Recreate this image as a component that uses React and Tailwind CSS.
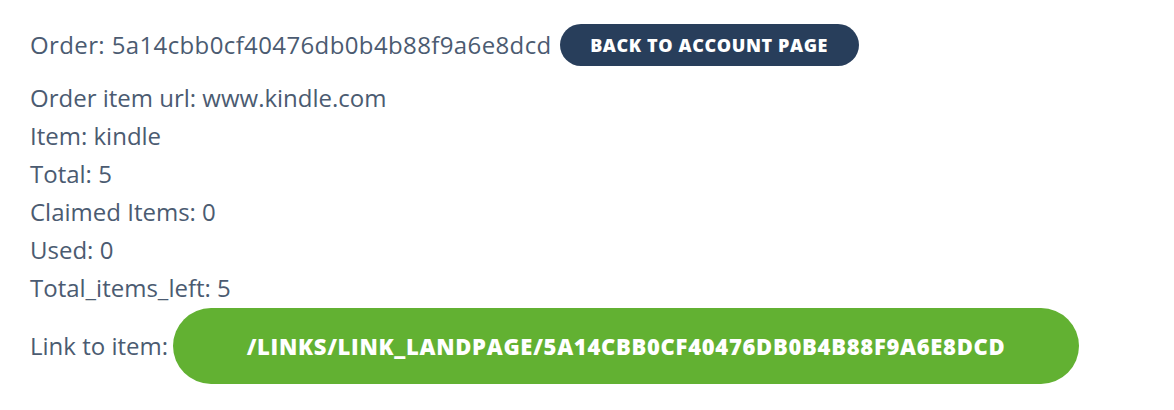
const rows = [
    "Order item url: www.kindle.com",
    "Item: kindle",
    "Total: 5",
    "Claimed Items: 0",
    "Used: 0",
    "Total_items_left: 5",
];

const App = () => {
    return (
        <div className="min-h-screen bg-white px-[30px] pt-[24px] text-[#4b5b71] font-['Open_Sans',sans-serif]">
            <div className="flex items-center gap-2 h-[42px]">
                <span className="text-[24px] tracking-[0.38px]">Order: 5a14cbb0cf40476db0b4b88f9a6e8dcd</span>
                <button className="h-[42px] w-[299px] rounded-full bg-[#283e5b] text-white text-[18px] tracking-[0.6px] font-extrabold uppercase">
                    Back to account page
                </button>
            </div>
            <div className="mt-[13px]">
                {rows.map((row) => (
                    <div key={row} className="text-[24px] leading-[38px]">{row}</div>
                ))}
            </div>
            <div className="flex items-center gap-[5px] mt-[1px]">
                <span className="text-[24px]">Link to item:</span>
                <button className="h-[76px] w-[906px] rounded-full bg-[#62b132] text-white text-[22px] tracking-[0.7px] font-extrabold uppercase">
                    /links/link_landpage/5a14cbb0cf40476db0b4b88f9a6e8dcd
                </button>
            </div>
        </div>
    );
};

export default App;
